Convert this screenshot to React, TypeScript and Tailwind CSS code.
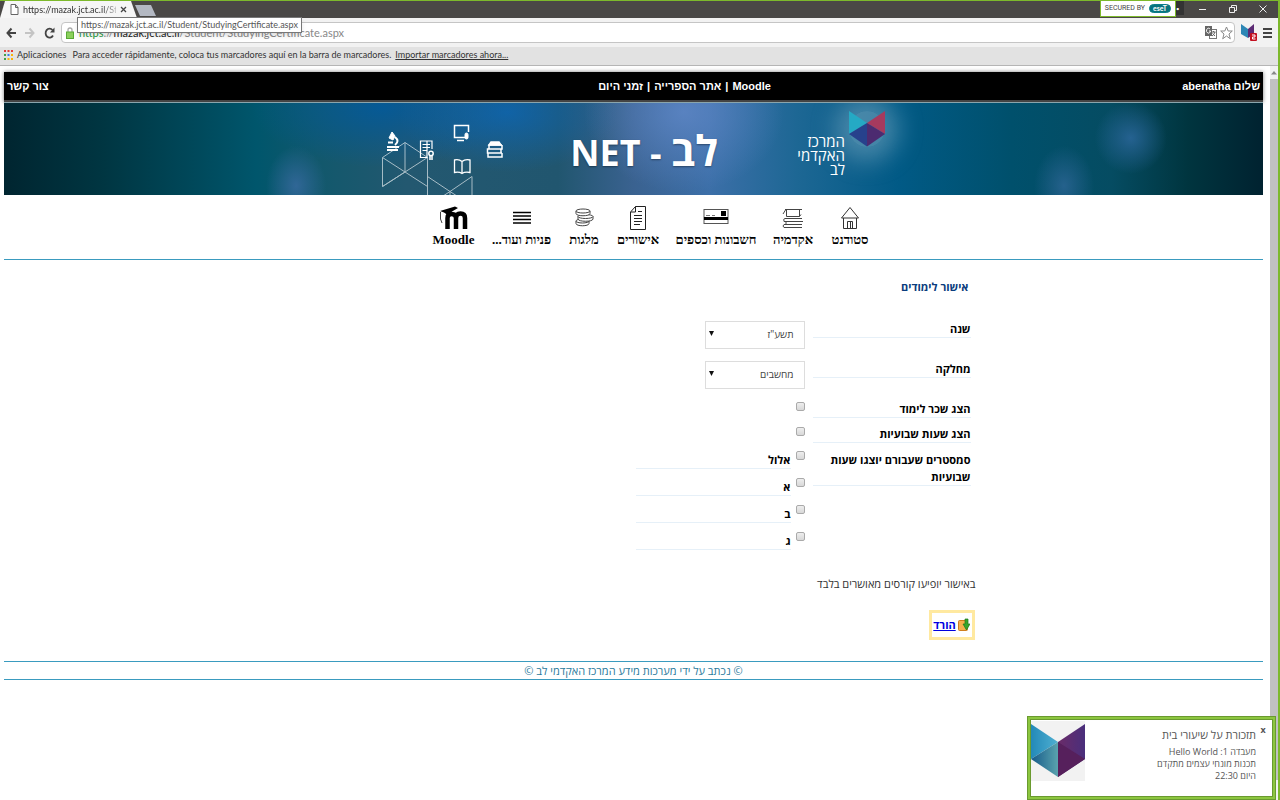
import React, { useState } from 'react';

const years = ['תשע"ז', 'תשע"ו', 'תשע"ה'];
const departments = ['מחשבים', 'ניהול', 'הנדסה'];
const semesters = ['אלול', 'א', 'ב', 'ג'];

const HouseIcon = () => (
  <svg width="20" height="24" viewBox="0 0 20 24" fill="none" stroke="#333" strokeWidth="1">
    <path d="M1.500 12L10 1.500L18.500 12zM3.500 12V22.500H16.500V12M7.500 22.500V15.500H12.500V22.500M10.500 16V22" />
  </svg>
);

const AcademyIcon = () => (
  <svg width="22" height="24" viewBox="0 0 22 24" fill="none" stroke="#444" strokeWidth="1">
    <path d="M3 3.500H20M4.500 3.500V10.500H17.500V3.500M3.500 4L1 8M17.500 10.500L19 8.500" />
    <path d="M20 12.500H3Q1 12.500 2 15.500H19M21 15.500H4V18.500H20M20 18.500H2Q0 20 2 21.500H20" />
  </svg>
);

const CardIcon = () => (
  <svg width="26" height="24" viewBox="0 0 26 24">
    <rect x="1" y="3.500" width="24" height="14" fill="#fff" stroke="#555" />
    <rect x="1" y="11" width="24" height="3" fill="#000" />
    <rect x="18" y="5" width="5" height="5" fill="#000" />
    <path d="M3 9.500H7M9 9.500H12" stroke="#777" />
  </svg>
);

const PageIcon = () => (
  <svg width="18" height="24" viewBox="0 0 18 24" fill="none" stroke="#222">
    <path d="M6.500 .5H16.500V23.500H1.500V6L6.500 .5V6H2M9 5.500H13M5 9.500H13M5 12.500H13M5 15.500H13M5 18.500H11" />
  </svg>
);

const CoinsIcon = () => (
  <svg width="20" height="24" viewBox="0 0 20 24" fill="#fff" stroke="#444">
    <path d="M2 15V17.500C2 20.500 15 20.500 15 17.500V15" />
    <ellipse cx="8.500" cy="15" rx="6.500" ry="2" />
    <path d="M4 10.500V13C4 16 19 16 19 13V10.500" />
    <ellipse cx="11.500" cy="10.500" rx="7.500" ry="2" />
    <path d="M2 5V7.500C2 10.500 16 10.500 16 7.500V5" />
    <ellipse cx="9" cy="5" rx="7" ry="2" />
  </svg>
);

const LinesIcon = () => (
  <svg width="18" height="24" viewBox="0 0 18 24" stroke="#000" strokeWidth="1.500">
    <path d="M0 6.500H18M0 10H18M0 13.500H18M0 17H18" />
  </svg>
);

const MoodleIcon = () => (
  <svg width="30" height="24" viewBox="0 0 30 24">
    <path d="M1 5L16 .5L19 2L13 5.500Q11 7 10 10L5 6.500z" fill="#000" />
    <path d="M1.500 6V13L3 17" fill="none" stroke="#444" />
    <path d="M8.500 23V12Q8.500 8 12.500 8Q17 8 17 12V23M17 12Q17 7.500 21.500 7.500Q26 7.500 26 12V23" fill="none" stroke="#000" strokeWidth="4.500" />
  </svg>
);

const menu = [
  { name: 'סטודנט', icon: <HouseIcon />, width: 'w-[38px]' },
  { name: 'אקדמיה', icon: <AcademyIcon />, width: 'w-[38px]' },
  { name: 'חשבונות וכספים', icon: <CardIcon />, width: 'w-[78px]' },
  { name: 'אישורים', icon: <PageIcon />, width: 'w-[40px]' },
  { name: 'מלגות', icon: <CoinsIcon />, width: 'w-[30px]' },
  { name: 'פניות ועוד...', icon: <LinesIcon />, width: 'w-[57px]' },
  { name: 'Moodle', icon: <MoodleIcon />, width: 'w-[41px]' },
];

const TitleBar = () => (
  <div className="relative flex h-[17px] items-start bg-[#4a4846]">
    <div className="flex h-[17px] w-[137px] items-center gap-1 bg-[#f6f6f6] pl-2.5 [clip-path:polygon(5px_0,131px_0,137px_100%,0_100%)]">
      <svg width="9" height="11" viewBox="0 0 9 11" fill="#fff" stroke="#666">
        <path d="M1 .5H5.500L8 3.500V10.500H1zM5.500 .5V3.500H8" />
      </svg>
      <span className="w-[93px] text-[9px] whitespace-nowrap text-[#333] [mask-image:linear-gradient(to_right,#000_85%,#0004)]">
        https://mazak.jct.ac.il/Stu
      </span>
      <button aria-label="Cerrar pestaña">
        <svg width="7" height="7" viewBox="0 0 7 7" stroke="#444" strokeWidth="1.300"><path d="M1 1L6 6M6 1L1 6" /></svg>
      </button>
    </div>
    <button aria-label="Nueva pestaña" className="mt-1 -ml-0.5 h-[11px] w-[21px] bg-[#b3b8c2] [clip-path:polygon(0_0,16px_0,100%_100%,5px_100%)]" />
    <div className="ml-auto flex h-4 items-center gap-1 border border-t-0 border-[#7db92c] bg-white px-1 text-[#444]">
      <span className="font-['Roboto',sans-serif] text-[7px] whitespace-nowrap">SECURED BY</span>
      <span className="rounded-full border border-[#0b7d89] bg-[#08737e] px-[3px] text-[7px] leading-[7px] font-bold text-white">eseT</span>
    </div>
    <div className="flex h-3.5 w-2 items-center bg-[#333] text-[6px] text-white">•</div>
    <div className="flex h-4 items-center gap-5 pr-[10px] pl-[14px]">
      <button aria-label="Minimizar"><svg width="10" height="10" stroke="#eee"><path d="M1 5.500H8" /></svg></button>
      <button aria-label="Restaurar"><svg width="10" height="10" fill="none" stroke="#eee"><path d="M1.500 3.500H6.500V8.500H1.500zM3.500 3.500V1.500H8.500V6.500H6.500" /></svg></button>
      <button aria-label="Cerrar"><svg width="10" height="10" stroke="#eee"><path d="M1.500 1.500L8.500 8.500M8.500 1.500L1.500 8.500" /></svg></button>
    </div>
    <div className="absolute top-4 left-[77px] z-10 border border-[#777] bg-white px-[3px] text-[9px] leading-[14px] whitespace-nowrap text-[#555] shadow-md">
      https://mazak.jct.ac.il/Student/StudyingCertificate.aspx
    </div>
  </div>
);

const Toolbar = () => (
  <div className="flex h-[29px] items-center bg-[#f2f2f2] px-1.5">
    <button aria-label="Atrás"><svg width="10" height="12" viewBox="0 0 10 12" fill="none" stroke="#444" strokeWidth="2"><path d="M10 6H1.500M5.500 1.500L1.500 6L5.500 10.500" /></svg></button>
    <button aria-label="Adelante" className="ml-[9px]"><svg width="10" height="12" viewBox="0 0 10 12" fill="none" stroke="#c4c4c4" strokeWidth="2"><path d="M0 6H8.500M4.500 1.500L8.500 6L4.500 10.500" /></svg></button>
    <button aria-label="Recargar" className="ml-[9px]"><svg width="11" height="12" viewBox="0 0 11 12" fill="none" stroke="#444" strokeWidth="1.800"><path d="M9 8.500A4 4.500 0 1 1 8.500 3" /><path d="M10.500 .5V5.500H6z" fill="#444" stroke="none" /></svg></button>
    <div className="ml-[6px] flex h-[21px] flex-1 items-center rounded-sm border border-[#c5c5c5] bg-white pr-px pl-1">
      <svg width="8" height="12" viewBox="0 0 8 12">
        <path d="M2 5V3Q2 1 4 1Q6 1 6 3V5" fill="none" stroke="#aaa" strokeWidth="1.300" />
        <rect x=".5" y="5" width="7" height="6.500" fill="#8bd05c" stroke="#58a935" />
      </svg>
      <div className="ml-[5px] text-[11px] leading-[18px] whitespace-nowrap text-[#888]">
        <span className="text-[#1f9a3c]">https</span>://<span className="text-[#222]">mazak.jct.ac.il</span>/Student/StudyingCertificate.aspx
      </div>
      <svg className="ml-auto" width="12" height="13" viewBox="0 0 12 13">
        <rect x="4.500" y="3.500" width="7" height="9" fill="#fff" stroke="#777" />
        <rect x="0" y="0" width="7" height="10" fill="#666" />
        <path d="M5 3A2 2.500 0 1 0 5.500 5H4" fill="none" stroke="#fff" />
        <path d="M7 6H10.500M8.500 5V6M10 6Q9 9 7 10M7.500 7.500L10 10" fill="none" stroke="#666" />
      </svg>
      <svg className="ml-[3px]" width="13" height="14" viewBox="0 0 13 14" fill="#fff" stroke="#888">
        <path d="M6.500 1L8.200 5H12.300L9 8L10.300 12.800L6.500 10L2.700 12.800L4 8L.7 5H4.800z" />
      </svg>
    </div>
    <svg className="ml-[6px]" width="18" height="19" viewBox="0 0 18 19">
      <path d="M0 1L7 6V15L0 11z" fill="#2c86b5" />
      <path d="M13 1L7 6V15L13 11z" fill="#5c2a74" />
      <rect x="9" y="10" width="7" height="8" rx="1" fill="#c31020" />
      <path d="M11 12H14V14H11.500V16H14.500" fill="none" stroke="#fff" />
    </svg>
    <button aria-label="Menú" className="ml-1"><svg width="9" height="12" stroke="#444" strokeWidth="2"><path d="M0 2H9M0 6H9M0 10H9" /></svg></button>
  </div>
);

const Bookmarks = () => (
  <div className="flex h-[19px] items-center border-b border-[#b5b5b5] bg-[#e2e2e2] pb-0.5 pl-1 text-[9px] whitespace-nowrap text-[#333]">
    <svg width="9" height="10" viewBox="0 0 9 10">
      <path d="M0 1H2M3.500 1H5.500M7 1H9" stroke="#e53935" strokeWidth="2" />
      <path d="M0 5H2" stroke="#43a047" strokeWidth="2" />
      <path d="M3.500 5H5.500" stroke="#3b78e7" strokeWidth="2" />
      <path d="M7 5H9M3.500 9H5.500M7 9H9" stroke="#f9b208" strokeWidth="2" />
      <path d="M0 9H2" stroke="#43a047" strokeWidth="2" />
    </svg>
    <span className="ml-1">Aplicaciones</span>
    <span className="ml-1.5">Para acceder rápidamente, coloca tus marcadores aquí en la barra de marcadores.</span>
    <a href="#import" className="ml-1 underline">Importar marcadores ahora...</a>
  </div>
);

const BannerIcons = () => (
  <svg width="122" height="93" viewBox="0 0 122 93" fill="none" stroke="#fff">
    <g strokeWidth="1" opacity=".6">
      <path d="M.5 54.500L23 39.500L45.500 54.500V83.500L.5 54.500V83.500L45.500 54.500M.5 83.500L23 69M23 39.500V69" />
      <path d="M45.500 93V73.500L68 88.500L90 73.500V93M58 95L68 88.500L78 95M68 88.500V93" />
    </g>
    <g strokeWidth="1.500">
      <path d="M7 35L10 29L13 33L11 37z" fill="#fff" strokeWidth="1" />
      <path d="M13 34Q18 38 13 42M6 39.500H11" strokeWidth="2" />
      <path d="M5 44H17M5 47H16" strokeWidth="2" />
      <path d="M45 38V54.500H38.500V38H50V46M40.500 41.500H48M40.500 44.500H48M40.500 47.500H45" strokeWidth="1.200" />
      <circle cx="49" cy="50.500" r="2.200" /><path d="M48 53V57M50 53V57" />
      <path d="M84 34.500H72.500V22.500H86.500V29M75 37.500H82" />
      <rect x="83" y="30" width="3" height="6" rx="1.500" fill="#fff" strokeWidth="1" />
      <path d="M80 58.500Q77 56 72.500 57V69.500Q77 68.500 80 70.500Q83 68.500 88 69.500V57Q83 56 80 58.500V70" strokeWidth="1.300" />
      <path d="M107 42L109 39H117L119 42z" fill="#fff" />
      <path d="M120 42H107V46H120V42M119 46H105.500V50H119V46M120 50H106V54H120V50" />
    </g>
  </svg>
);

const CubeLogo = ({ size }: { size: number }) => (
  <svg width={size} height={size} viewBox="0 0 36 36">
    <path d="M0 0L18 12L0 23z" fill="#25a9c4" />
    <path d="M36 0L18 12L36 23z" fill="#a63a5e" />
    <path d="M0 23L18 12V35.500z" fill="#27418c" />
    <path d="M36 23L18 12V35.500z" fill="#4c2b70" />
  </svg>
);

const Banner = () => (
  <div className="flex h-[93px] justify-center overflow-hidden border-t border-[#8aa5ad] bg-[radial-gradient(ellipse_30px_40px_at_23.200%_90%,#36699ddd,transparent),radial-gradient(ellipse_30px_40px_at_84.200%_90%,#2a6492dd,transparent),radial-gradient(ellipse_36px_36px_at_89.500%_38%,#2a6699dd,transparent),radial-gradient(ellipse_100px_80px_at_54%_10%,#6088c8cc,transparent),radial-gradient(ellipse_110px_60px_at_40%_10%,#0c66b4cc,transparent),radial-gradient(ellipse_130px_60px_at_30%_5%,#005a9fcc,transparent),linear-gradient(to_right,#002530,#003642_8%,#00485a_15%,#00566c_20%,#12586c_25%,#235870_32%,#21566f_44%,#3a6290_50%,#3c6fa8_56%,#1d6794_63%,#015a86_71%,#00506c_80%,#054c62_88%,#00353f_94%,#002230)]">
    <div className="flex pt-2">
      <div className="size-[36px] rounded-full bg-[#9fc3d466] shadow-[0_0_24px_14px_#9fc3d466]">
        <CubeLogo size={36} />
      </div>
      <div className="mr-1 w-[49px] pt-[23px] text-[15px] leading-[14px] text-white">
        <div>המרכז</div>
        <div>האקדמי</div>
        <div>לב</div>
      </div>
    </div>
    <h1 className="mr-[78px] w-[146px] text-center text-[36px] leading-[94px] font-bold whitespace-nowrap text-white [text-shadow:0_1px_2px_#0006]">
      <span className="text-[42px]">לב</span> - NET
    </h1>
    <div className="mr-[68px]">
      <BannerIcons />
    </div>
  </div>
);

interface SelectBoxProps {
  id: string;
  options: string[];
}

const SelectBox: React.FC<SelectBoxProps> = ({ id, options }) => (
  <div className="relative h-7 w-[100px]">
    <select id={id} className="h-full w-full appearance-none border border-[#ddd] bg-white pr-2.5 pl-4 text-[10px] text-[#444]">
      {options.map((option) => (
        <option key={option}>{option}</option>
      ))}
    </select>
    <svg className="pointer-events-none absolute top-[11px] left-1" width="5" height="5" viewBox="0 0 5 5"><path d="M0 0H5L2.500 5z" fill="#111" /></svg>
  </div>
);

const checkbox =
  'block size-[9px] appearance-none rounded-[2px] border border-[#aaa] bg-linear-to-b from-[#eee] to-[#d8d8d8] checked:bg-[#666]';
const label = 'block border-b border-[#e6f0f8] text-[11px] leading-[17px] font-bold text-black';

const CertificateForm = () => (
  <form className="mx-auto w-full max-w-[684px] pt-[18px] pr-[5px] pl-[3px]">
    <h2 className="px-0.5 text-[11px] leading-[18px] font-bold text-[#0a3c7d]">אישור לימודים</h2>
    <div className="mt-6 grid grid-cols-[158px_1fr] items-start gap-x-2">
      <label htmlFor="year" className={label}>שנה</label>
      <div className="pb-3"><SelectBox id="year" options={years} /></div>
      <label htmlFor="department" className={label}>מחלקה</label>
      <div className="pb-3"><SelectBox id="department" options={departments} /></div>
      <label htmlFor="tuition" className={label}>הצג שכר לימוד</label>
      <div className="h-[25px] pt-0.5"><input id="tuition" type="checkbox" className={checkbox} /></div>
      <label htmlFor="hours" className={label}>הצג שעות שבועיות</label>
      <div className="h-[26px] pt-0.5"><input id="hours" type="checkbox" className={checkbox} /></div>
      <span className={label}>סמסטרים שעבורם יוצגו שעות שבועיות</span>
      <div className="flex flex-col gap-[9px]">
        {semesters.map((semester, i) => (
          <div key={semester} className="flex gap-[5px]">
            <input id={`semester-${i}`} type="checkbox" className={checkbox} />
            <label htmlFor={`semester-${i}`} className={`${label} w-[155px]`}>{semester}</label>
          </div>
        ))}
      </div>
    </div>
  </form>
);

const Toast = ({ onClose }: { onClose: () => void }) => (
  <div className="fixed right-1 bottom-0 z-20 flex h-[84px] w-[249px] items-start border-3 border-[#8cc63f] bg-white pr-px text-[#555] inset-ring inset-ring-[#6a9a2f] outline-1 -outline-offset-1 outline-[#6a9a2f]">
    <button aria-label="סגור" className="mt-[6px] mr-1.5 w-[6px] text-[9px] leading-[10px] font-bold" onClick={onClose}>x</button>
    <div className="mr-1 pt-2 text-[9px] leading-[12px] whitespace-nowrap">
      <div className="mb-[3px] text-[11px] leading-[16px]">תזכורת על שיעורי בית</div>
      <div>מעבדה 1: Hello World</div>
      <div>תכנות מונחי עצמים מתקדם</div>
      <div>היום 22:30</div>
    </div>
    <div className="mt-0.5 mr-auto ml-px h-[60px] w-[54px] bg-[#f2f2f2]">
      <svg width="54" height="58" viewBox="0 0 54 58">
        <defs>
          <linearGradient id="blue" x1="0" x2="1"><stop offset="0" stopColor="#2389b8" /><stop offset="1" stopColor="#4fb0d2" /></linearGradient>
          <linearGradient id="teal" x1="0" x2="1"><stop offset="0" stopColor="#155a8a" /><stop offset="1" stopColor="#5aa3ae" /></linearGradient>
          <linearGradient id="violet" x1="0" x2="1"><stop offset="0" stopColor="#6a2b68" /><stop offset="1" stopColor="#4a2f7c" /></linearGradient>
        </defs>
        <path d="M0 3L27 21L0 38z" fill="url(#blue)" />
        <path d="M0 38L27 21V56z" fill="url(#teal)" />
        <path d="M54 3L27 21V56L54 38z" fill="url(#violet)" />
        <path d="M27 21L54 38L27 56z" fill="#56205c" />
      </svg>
    </div>
  </div>
);

export default function App() {
  const [toastOpen, setToastOpen] = useState(true);

  return (
    <div className="flex min-h-screen flex-col border-t border-r-2 border-[#7db92c] bg-white font-['Open_Sans','Noto_Sans',sans-serif]">
      <header className="font-['Lato',sans-serif]">
        <TitleBar />
        <Toolbar />
        <Bookmarks />
      </header>
      <div className="flex flex-1">
        <div dir="rtl" className="min-w-0 flex-1 pt-[6px] pr-[7px] pl-1">
          <div className="grid h-[30px] grid-cols-[1fr_auto_1fr] border-b-2 border-[#444] bg-black px-[3px] font-['Liberation_Sans',sans-serif] text-[11px] leading-7 font-bold text-white shadow-[0_0_4px_#0008]">
            <span>שלום abenatha</span>
            <nav className="flex gap-1 pl-[102px]">
              <a href="#moodle">Moodle</a>|
              <a href="#library">אתר הספרייה</a>|
              <a href="#times">זמני היום</a>
            </nav>
            <a href="#contact" className="text-left">צור קשר</a>
          </div>
          <Banner />
          <nav className="flex h-[65px] justify-center gap-[19px] border-b border-[#3a9bbf] pt-[11px] pl-[35px] font-['Liberation_Serif',serif] text-[13px] leading-[20px] font-bold text-black">
            {menu.map((item) => (
              <a key={item.name} href="#menu" className={`flex flex-col items-center whitespace-nowrap ${item.width}`}>
                {item.icon}
                <span>{item.name}</span>
              </a>
            ))}
          </nav>
          <CertificateForm />
          <div className="mx-auto mt-[25px] w-full max-w-[684px]">
            <p className="text-[11px] leading-[17px] text-[#333]">באישור יופיעו קורסים מאושרים בלבד</p>
            <a href="#download" className="mt-[18px] mr-px flex h-[30px] w-[46px] items-center justify-center gap-0.5 border-3 border-[#ffe9a0] text-[11px] font-bold text-[#0000e0]">
              <svg width="12" height="14" viewBox="0 0 12 14">
                <rect x=".5" y="2.500" width="9" height="10" rx="1" fill="#f5b04c" stroke="#cf7f1e" />
                <path d="M7 1H10V6H12L8.500 12L5 6H7z" fill="#37a52b" stroke="#1d7a17" strokeWidth=".7" />
              </svg>
              <span className="underline">הורד</span>
            </a>
          </div>
          <footer className="mt-[21px] border-y border-[#3a9bbf] text-center text-[11px] leading-[17px] text-[#2a7a9c]">
            © נכתב על ידי מערכות מידע המרכז האקדמי לב ©
          </footer>
        </div>
        <div className="flex w-2 flex-col bg-[#f1f1f1]">
          <svg className="my-1" width="8" height="5" viewBox="0 0 8 5"><path d="M4 1L7 4.500H1z" fill="#888" /></svg>
          <div className="mb-5 flex-1 bg-[#c1c1c1]" />
        </div>
      </div>
      {toastOpen && <div dir="rtl"><Toast onClose={() => setToastOpen(false)} /></div>}
    </div>
  );
}
